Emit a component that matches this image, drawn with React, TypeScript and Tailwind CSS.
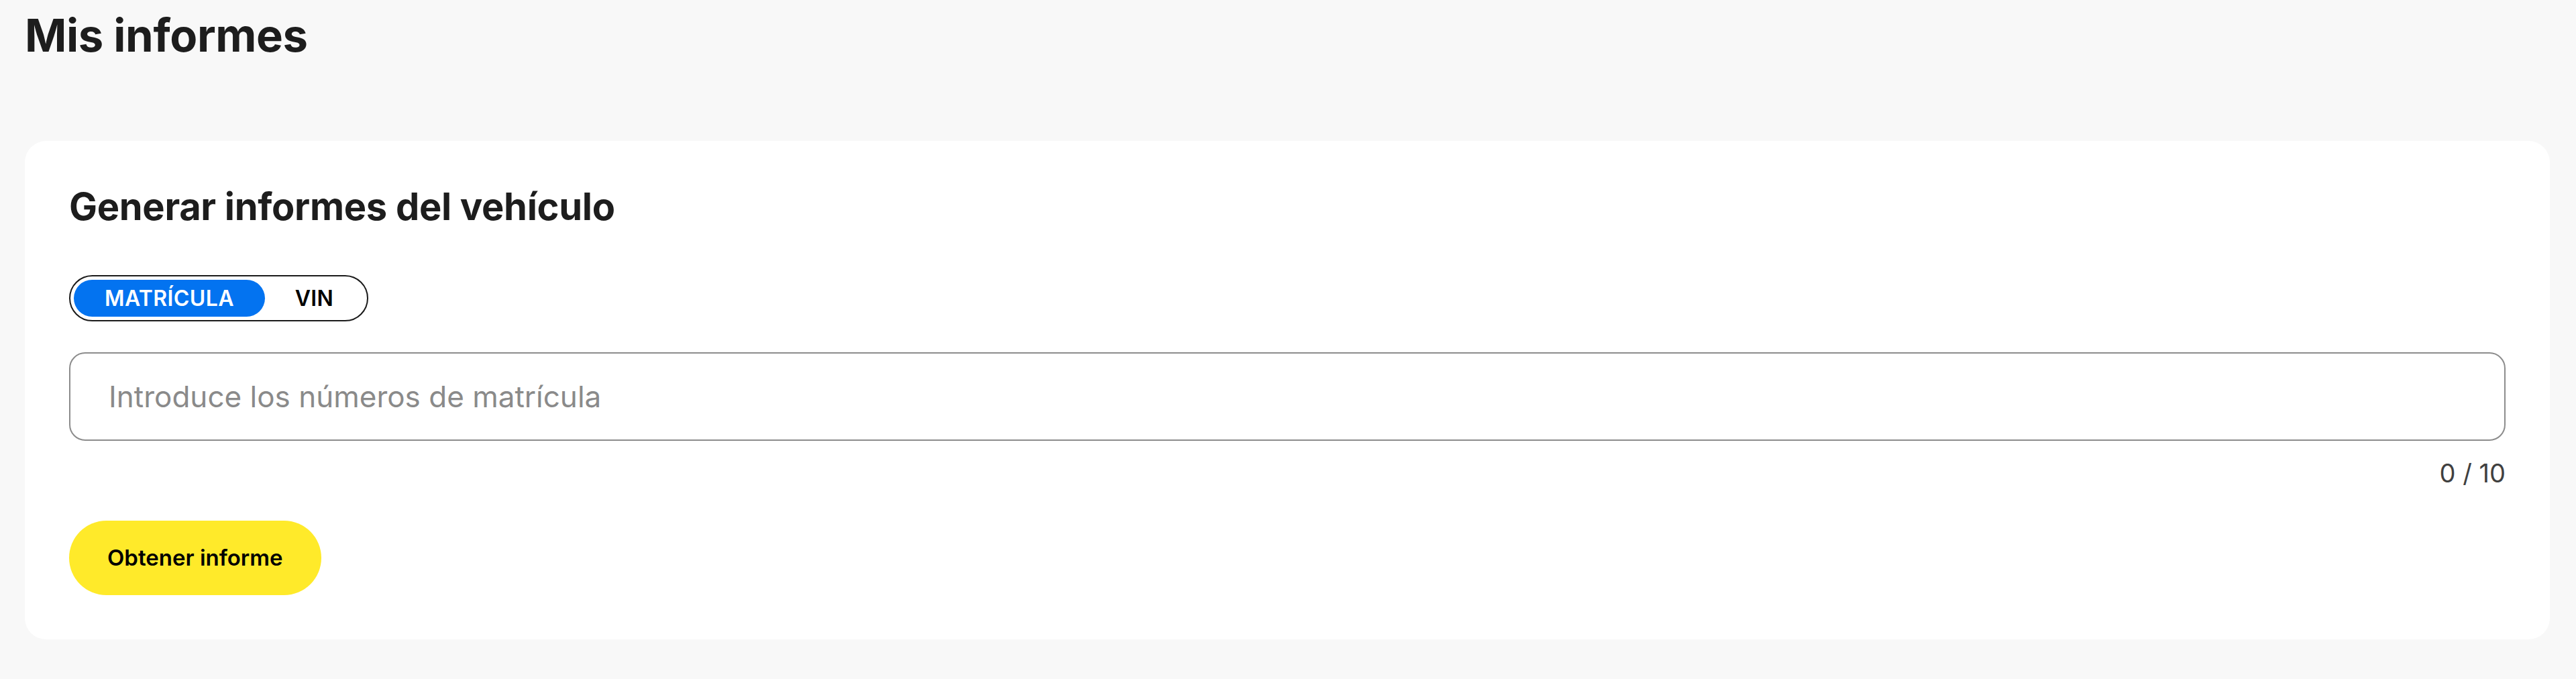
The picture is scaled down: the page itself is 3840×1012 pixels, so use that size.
import * as React from "react";

export default function App() {
    const [mode, setMode] = React.useState<"plate" | "vin">("plate");
    const [value, setValue] = React.useState("");

    const count = value.split(/[\s,]+/).filter((v) => v.length > 0).length;

    return (
        <div className="min-h-screen w-full bg-[#f8f8f8] pl-[37px] pr-[39px] pb-[56px] font-['Inter',sans-serif] text-[#1d1d1d]">
            <h1 className="pt-[13px] text-[67px] font-bold leading-[80px] tracking-[-0.4px]">Mis informes</h1>

            <div className="mt-[117px] rounded-[32px] bg-white px-[66px] pt-[64px] pb-[66px]">
                <h2 className="text-[56px] font-bold leading-[68px] tracking-[-0.3px]">Generar informes del vehículo</h2>

                <div className="mt-[68px] inline-flex rounded-full border-2 border-[#1a1a1a] p-[5px]">
                    <button
                        onClick={() => setMode("plate")}
                        className={
                            mode === "plate"
                                ? "flex h-[55px] w-[285px] items-center justify-center rounded-full bg-[#0373f0] text-[32px] font-semibold uppercase leading-none tracking-[0.4px] text-white"
                                : "flex h-[55px] w-[285px] items-center justify-center rounded-full text-[32px] font-semibold uppercase leading-none tracking-[0.4px] text-black"
                        }
                    >
                        Matrícula
                    </button>
                    <button
                        onClick={() => setMode("vin")}
                        className={
                            mode === "vin"
                                ? "flex h-[55px] w-[147px] items-center justify-center rounded-full bg-[#0373f0] text-[32px] font-semibold uppercase leading-none tracking-[0.4px] text-white"
                                : "flex h-[55px] w-[147px] items-center justify-center rounded-full text-[32px] font-semibold uppercase leading-none tracking-[0.4px] text-black"
                        }
                    >
                        VIN
                    </button>
                </div>

                <input
                    value={value}
                    onChange={(e) => setValue(e.target.value)}
                    placeholder={mode === "plate" ? "Introduce los números de matrícula" : "Introduce los números VIN"}
                    className="mt-[46px] block h-[132px] w-full rounded-[24px] border-2 border-[#8c8c8c] bg-white pl-[57px] pr-[57px] text-[44px] text-[#1d1d1d] outline-none placeholder:text-[#8a8a8a]"
                />

                <div className="mt-[25px] text-right text-[38px] leading-[46px] text-[#404040]">
                    {count} / 10
                </div>

                <button className="mt-[48px] flex h-[111px] items-center rounded-full bg-[#ffea2a] px-[57px] text-[33px] font-semibold leading-none text-black">
                    Obtener informe
                </button>
            </div>
        </div>
    );
}
